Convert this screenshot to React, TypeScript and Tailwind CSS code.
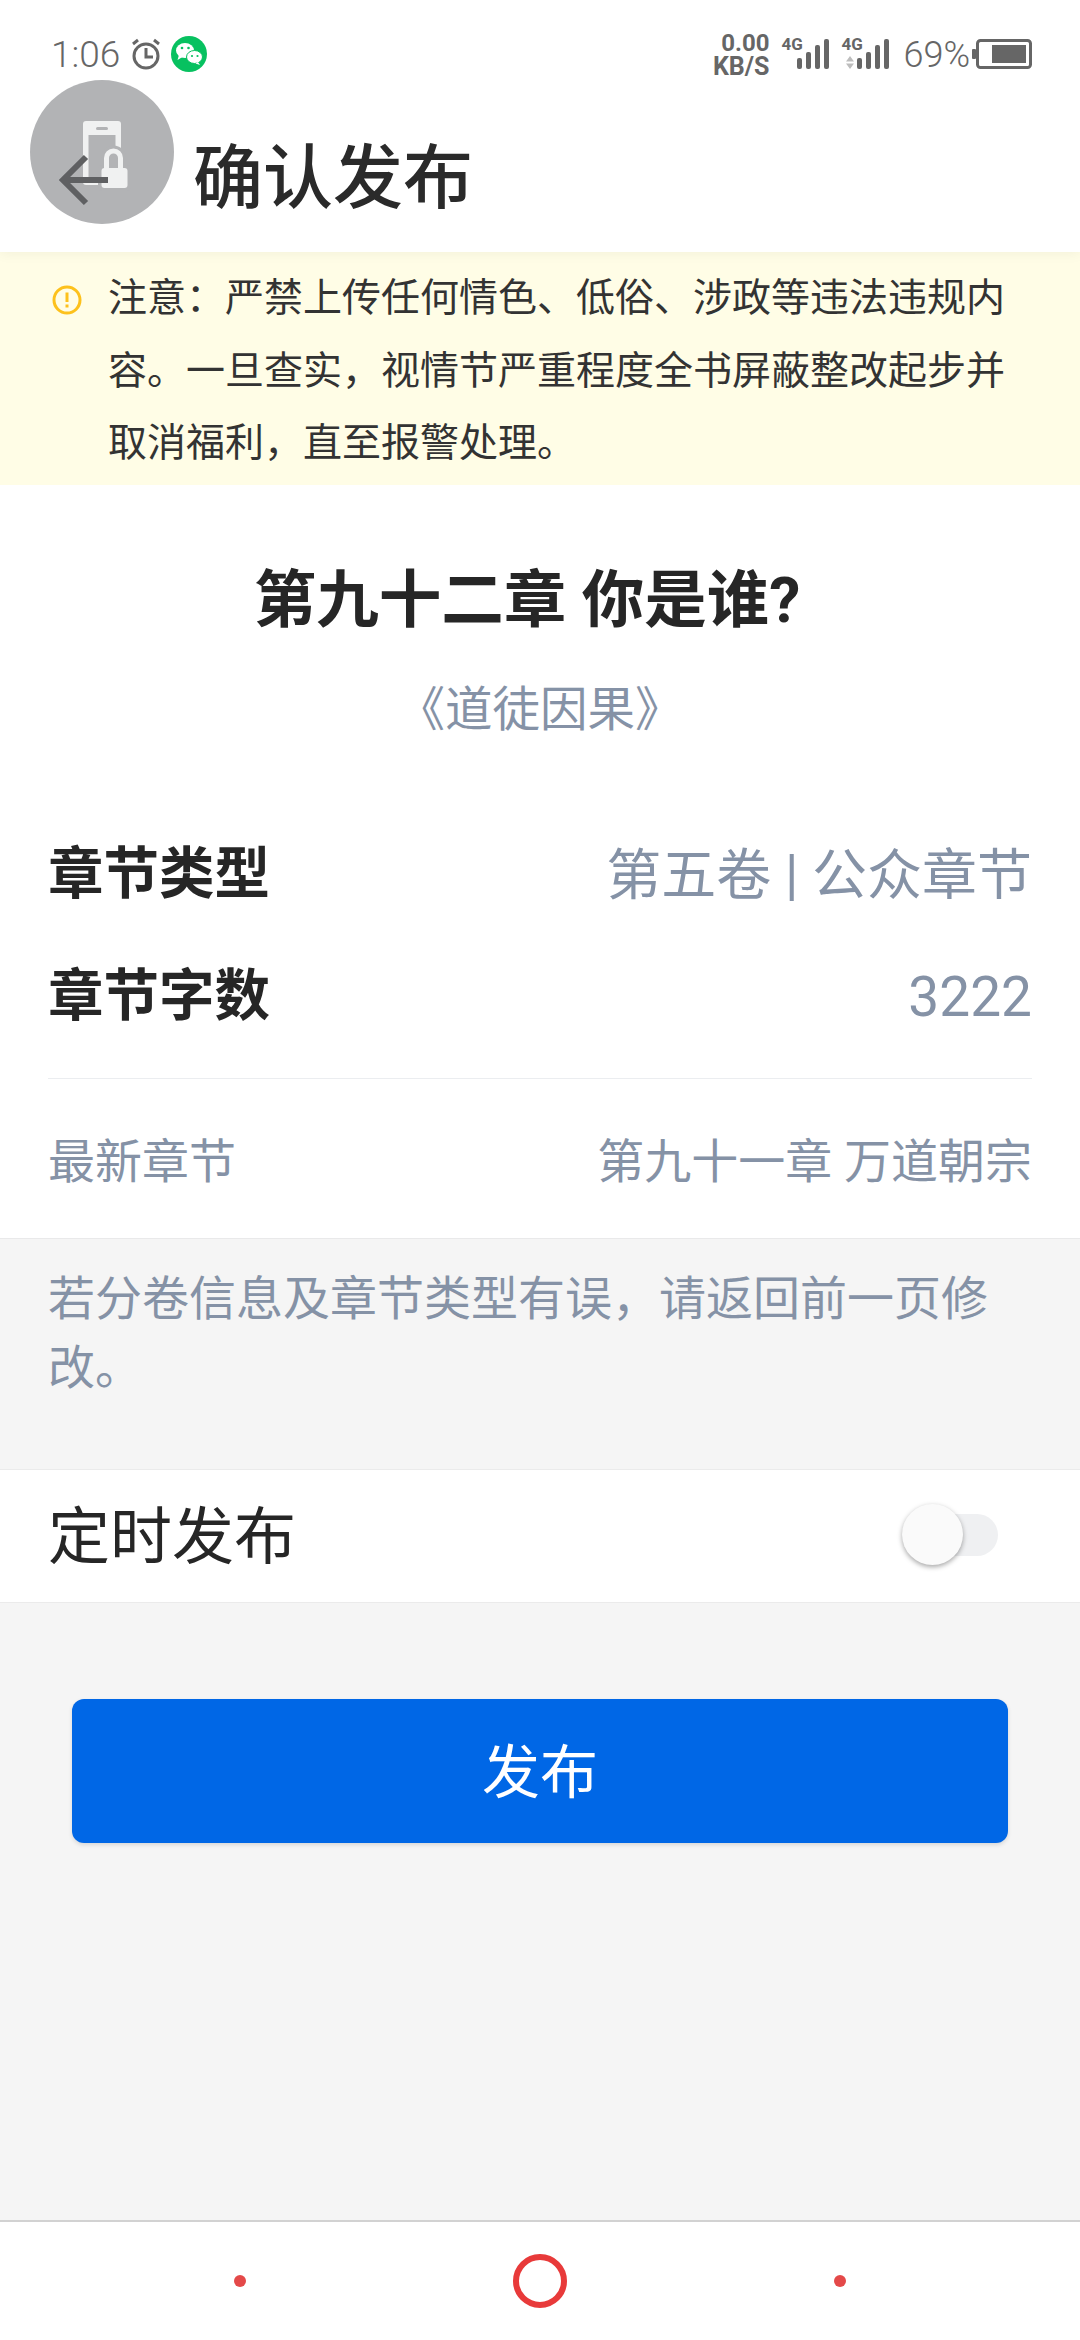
const FONT = "font-['Roboto','Noto_Sans_CJK_SC',sans-serif]";

function Signal({ arrows }: { arrows?: boolean }) {
  return (
    <div className="relative mb-[3px] h-[30px] w-[48px]">
      <span className="absolute left-0 top-[-3px] text-[17px] font-bold leading-[17px] text-[#666]">4G</span>
      {arrows && (
        <svg className="absolute left-[5px] top-[17px]" width="8" height="13" viewBox="0 0 8 13">
          <path d="M4 0l4 5.500H0zM4 13l4-5.500H0z" fill="#bdbdbd" />
        </svg>
      )}
      <svg className="absolute left-[16px] top-0" width="32" height="30" viewBox="0 0 32 30">
        <rect x="0" y="19" width="5" height="11" rx="2" fill="#666" />
        <rect x="9" y="13" width="5" height="17" rx="2" fill="#666" />
        <rect x="18" y="6" width="5" height="24" rx="2" fill="#666" />
        <rect x="27" y="0" width="5" height="30" rx="2" fill="#666" />
      </svg>
    </div>
  );
}

function Row({ k, v }: { k: string; v: string }) {
  return (
    <div className="flex h-[122px] items-center justify-between leading-[70px]">
      <span className="text-[55.500px] font-bold text-[#262626]">{k}</span>
      <span className="text-[55px] text-[#8592a6]">{v}</span>
    </div>
  );
}

export default function App() {
  return (
    <div className={`${FONT} flex h-[2340px] w-[1080px] flex-col overflow-hidden bg-[#f5f5f5]`}>
      <header className="relative z-10 h-[252px] shrink-0 bg-white shadow-[0_2px_12px_rgba(0,0,0,0.05)]">
        <div className="flex h-[110px] items-center justify-between pl-[51px] pr-[48px]">
          <div className="flex items-center">
            <span className="text-[37px] font-light text-[#666]">1:06</span>
            <svg width="30" height="32" viewBox="0 0 30 32" fill="none" stroke="#666" strokeWidth="3" className="ml-[11px] mb-[2px]">
              <circle cx="15" cy="18" r="12" />
              <path d="M15 10v9h7M2 6l5-4M28 6l-5-4" />
            </svg>
            <svg width="36" height="36" viewBox="0 0 36 36" className="ml-[10px] mb-[2px]">
              <circle cx="18" cy="18" r="18" fill="#07c160" />
              <ellipse cx="14" cy="14.500" rx="9" ry="7.500" fill="#fff" />
              <path d="M8 19l-1.500 5 5-3z" fill="#fff" />
              <circle cx="11" cy="12" r="1.300" fill="#07c160" />
              <circle cx="17.500" cy="12" r="1.300" fill="#07c160" />
              <ellipse cx="23.500" cy="21" rx="8" ry="6.500" fill="#fff" stroke="#07c160" strokeWidth="1" />
              <path d="M27 26l2 3-4.500-1.500z" fill="#fff" />
              <circle cx="21" cy="20" r="1.100" fill="#07c160" />
              <circle cx="26.500" cy="20" r="1.100" fill="#07c160" />
            </svg>
          </div>
          <div className="flex items-center">
            <div className="mr-[12px] text-right font-bold text-[#666]">
              <div className="text-[24px] leading-[23px]">0.00</div>
              <div className="text-[25px] leading-[23px]">KB/S</div>
            </div>
            <Signal />
            <div className="w-[12px]" />
            <Signal arrows />
            <span className="ml-[14px] text-[36px] font-light text-[#666]">69%</span>
            <svg width="60" height="32" viewBox="0 0 60 32" className="ml-[2px] mb-[2px]">
              <rect x="0" y="11" width="4" height="10" rx="1" fill="#666" />
              <rect x="5.500" y="2.500" width="53" height="27" rx="3" fill="none" stroke="#666" strokeWidth="3" />
              <rect x="20" y="7" width="34" height="18" fill="#666" />
            </svg>
          </div>
        </div>
        <h1 className="absolute left-[193px] top-[134px] text-[70px] font-medium leading-[90px] text-[#2a2a2a]">确认发布</h1>
        <svg className="absolute left-[30px] top-[80px]" width="144" height="144" viewBox="0 0 144 144">
          <circle cx="72" cy="72" r="72" fill="#b2b3b5" />
          <rect x="53" y="41" width="38" height="64" rx="3" fill="#f0f1f1" />
          <rect x="58.500" y="55" width="27" height="47" fill="#b2b3b5" />
          <rect x="66" y="47" width="12" height="3" rx="1.500" fill="#b2b3b5" />
          <path d="M76.500 90V78a7 7 0 0 1 14 0v12" fill="none" stroke="#b2b3b5" strokeWidth="11" />
          <rect x="68" y="85" width="33" height="26" rx="4" fill="#b2b3b5" />
          <path d="M76.500 90V78a7 7 0 0 1 14 0v12" fill="none" stroke="#f0f1f1" strokeWidth="5" />
          <rect x="71.500" y="88" width="26" height="20" rx="3" fill="#f0f1f1" />
          <path d="M56 77l-23 23 23 23M33 100h45" fill="none" stroke="#5f6062" strokeWidth="6" />
        </svg>
      </header>

      <div className="flex h-[233px] shrink-0 gap-[26px] bg-[#fffde6] pl-[52px] pr-[60px] pt-[10px] text-[#333]">
        <svg width="30" height="30" viewBox="0 0 30 30" className="mt-[23px] shrink-0" fill="none">
          <circle cx="15" cy="15" r="13" stroke="#fdc11c" strokeWidth="3" />
          <path d="M15 7.500v9.500M15 19.500v3" stroke="#fdc11c" strokeWidth="3" />
        </svg>
        <p className="text-[39px] leading-[72.500px]">注意：严禁上传任何情色、低俗、涉政等违法违规内容。一旦查实，视情节严重程度全书屏蔽整改起步并取消福利，直至报警处理。</p>
      </div>

      <section className="flex h-[753px] shrink-0 flex-col bg-white">
        <h2 className="mt-[76px] pr-[26px] text-center text-[62.500px] font-bold leading-[80px] text-[#262626]">第九十二章 你是谁?</h2>
        <div className="mt-[39px] text-center text-[47.500px] leading-[60px] text-[#8592a6]">《道徒因果》</div>
        <div className="mt-[74px] px-[48px]">
          <Row k="章节类型" v="第五卷 | 公众章节" />
          <Row k="章节字数" v="3222" />
          <div className="mt-[20px] flex justify-between border-t border-[#ebedf0] pt-[53px] text-[47px] leading-[60px] text-[#8592a6]">
            <span>最新章节</span>
            <span>第九十一章 万道朝宗</span>
          </div>
        </div>
      </section>

      <div className="h-[231px] shrink-0 border-t border-[#e9e9ea] pl-[48px] pr-[60px] pt-[25px] text-[47px] leading-[69px] text-[#8592a6]">
        若分卷信息及章节类型有误，请返回前一页修改。
      </div>

      <div className="flex h-[134px] shrink-0 items-center justify-between border-y border-[#ebebeb] bg-white pl-[48px] pr-[82px]">
        <span className="pt-[3px] text-[62px] leading-[80px] text-[#262626]">定时发布</span>
        <div className="relative mb-[2px] h-[42px] w-[96px] rounded-full bg-[#eff0f2]">
          <div className="absolute left-0 top-[-10px] h-[61px] w-[61px] rounded-full bg-[#fafafa] shadow-[0_2px_5px_rgba(0,0,0,0.35)]" />
        </div>
      </div>

      <div className="flex flex-1 flex-col px-[72px] pt-[96px]">
        <button className="flex h-[144px] items-center justify-center rounded-[12px] bg-[#0067e6] pt-[4px] text-[58px] text-white shadow-[0_2px_4px_rgba(0,0,0,0.12)]">发布</button>
      </div>

      <nav className="flex h-[120px] shrink-0 items-center justify-center gap-[267px] border-t-2 border-[#d2d2d2] bg-white">
        <div className="h-[12px] w-[12px] rounded-full bg-[#e44949]" />
        <div className="h-[54px] w-[54px] rounded-full border-[6px] border-[#e83a3a]" />
        <div className="h-[12px] w-[12px] rounded-full bg-[#e44949]" />
      </nav>
    </div>
  );
}
